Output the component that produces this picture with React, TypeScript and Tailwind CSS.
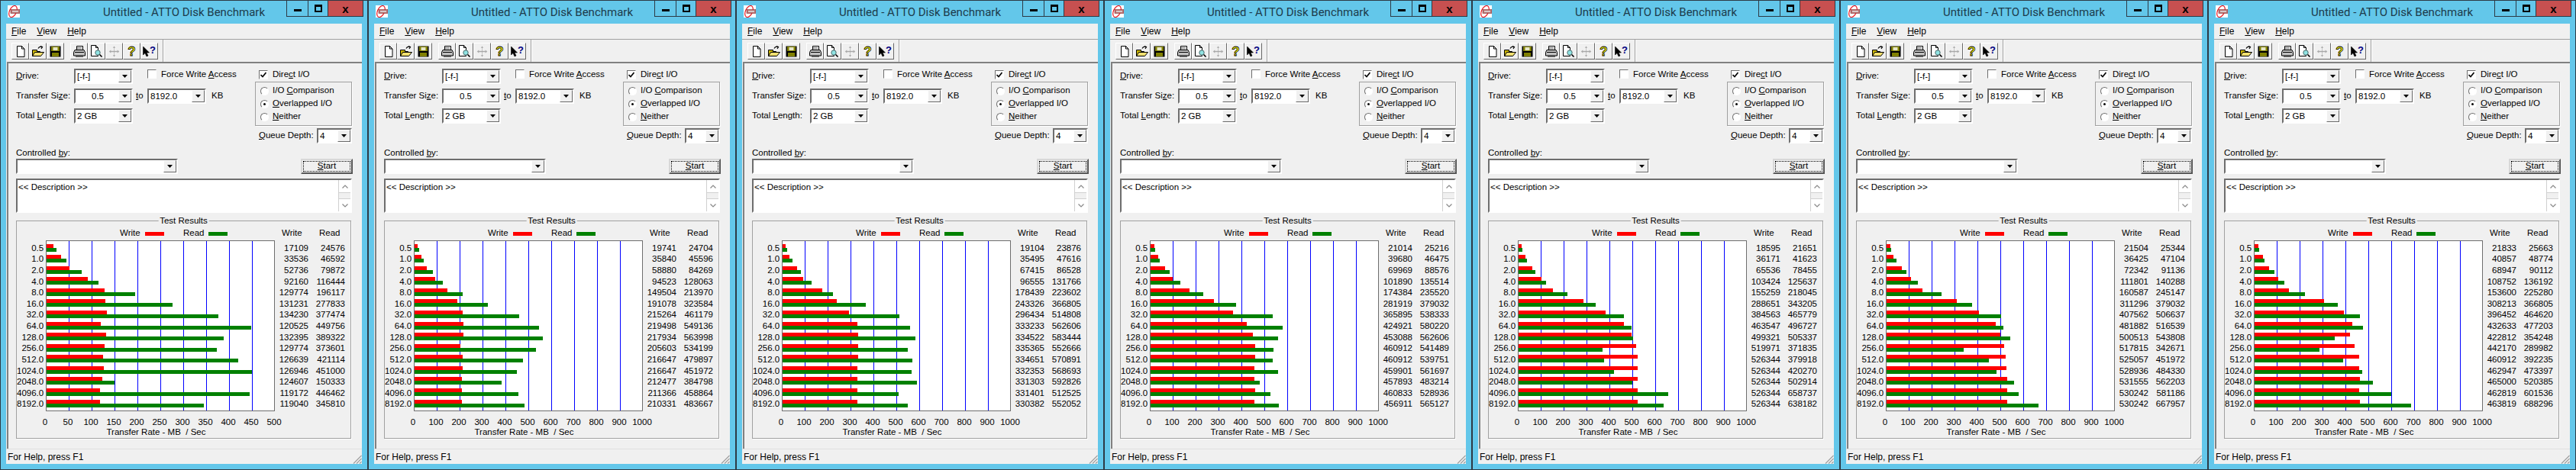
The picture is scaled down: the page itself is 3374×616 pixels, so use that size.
import type { ReactNode } from "react";

const SIZES = ["0.5", "1.0", "2.0", "4.0", "8.0", "16.0", "32.0", "64.0", "128.0", "256.0", "512.0", "1024.0", "2048.0", "4096.0", "8192.0"];
const BAR_TOPS = [5, 19, 34, 48, 63, 77, 92, 107, 121, 136, 150, 165, 179, 194, 209];
const ROWS = "grid grid-rows-[14px_15px_15px_14px_15px_14px_15px_15px_14px_15px_15px_14px_15px_14px_15px] pt-[3px]";
const RAISED = "border border-t-white border-l-white border-r-[#696969] border-b-[#696969]";
const SUNKEN = "border-2 border-t-[#6e6e6e] border-l-[#6e6e6e] border-r-white border-b-white";

const RUNS = [
  {
    max: 500,
    write: [17109, 33536, 52736, 92160, 129774, 131231, 134230, 120525, 132395, 129774, 126639, 126946, 124607, 119172, 119040],
    read: [24576, 46592, 79872, 116444, 196117, 277833, 377474, 449756, 389322, 373601, 421114, 451000, 150333, 446462, 345810],
  },
  {
    max: 1000,
    write: [19741, 35840, 58880, 94523, 149504, 191078, 215264, 219498, 217934, 205603, 216647, 216647, 212477, 211366, 210331],
    read: [24704, 45596, 84269, 128063, 213970, 323584, 461179, 549136, 563998, 534199, 479897, 451972, 384798, 458864, 483667],
  },
  {
    max: 1000,
    write: [19104, 35495, 67415, 96555, 178439, 243326, 296434, 333233, 334522, 335365, 334651, 332353, 331303, 331401, 330382],
    read: [23876, 47616, 86528, 131766, 223602, 366805, 514808, 562606, 583444, 552666, 570891, 568693, 592826, 512525, 552052],
  },
  {
    max: 1000,
    write: [21014, 39680, 69969, 101890, 174384, 281919, 365895, 424921, 453088, 460912, 460912, 459901, 457893, 460833, 456911],
    read: [25216, 46475, 88576, 135514, 235520, 379032, 538333, 580220, 562606, 541489, 539751, 561697, 483214, 528936, 565127],
  },
  {
    max: 1000,
    write: [18595, 36171, 65536, 103424, 155259, 288651, 384563, 463547, 499321, 519971, 526344, 526344, 526344, 526344, 526344],
    read: [21651, 41623, 78455, 125637, 218045, 343205, 465779, 496727, 505337, 371835, 379918, 420270, 502914, 658737, 638182],
  },
  {
    max: 1000,
    write: [21504, 36425, 72342, 111801, 160587, 311296, 407562, 481882, 500513, 517815, 525057, 528936, 531555, 530242, 530242],
    read: [25344, 47104, 91136, 140288, 245147, 379032, 506637, 516539, 543808, 342671, 451972, 484330, 562203, 581186, 667957],
  },
  {
    max: 1000,
    write: [21833, 40857, 68947, 108752, 153600, 308213, 396452, 432633, 422812, 442170, 460912, 462947, 465000, 462819, 463819],
    read: [25663, 48774, 90112, 136192, 225280, 366805, 464620, 477203, 354248, 289982, 392235, 473397, 520385, 601536, 688296],
  },
];

function U({ children }: { children: ReactNode }) {
  return <span className="underline">{children}</span>;
}

function Logo() {
  return (
    <svg width="16" height="16" viewBox="0 0 16 16" className="shrink-0">
      <rect width="16" height="16" fill="#fff" />
      <ellipse cx="7" cy="8" rx="4.5" ry="8" transform="rotate(25 7 8)" fill="none" stroke="#e8141c" strokeWidth="1.2" />
      <rect x="4" y="5.5" width="12" height="5" fill="#b8716f" stroke="#8c3b3b" strokeWidth="0.6" />
      <rect x="6" y="7" width="8" height="2" fill="#d9c9c9" />
    </svg>
  );
}

function DownArrow() {
  return (
    <svg width="7" height="4" viewBox="0 0 7 4">
      <path d="M0 0h7L3.5 4z" fill="#000" />
    </svg>
  );
}

function Combo({ value = "", width, center }: { value?: string; width: string; center?: boolean }) {
  return (
    <div className={`flex h-5 shrink-0 items-stretch bg-white ${SUNKEN} ${width}`}>
      <span className={`flex-1 pl-[2px] leading-[17px] ${center ? "text-center" : ""}`}>{value}</span>
      <span className={`flex w-[17px] items-center justify-center bg-[#f0f0f0] ${RAISED}`}>
        <DownArrow />
      </span>
    </div>
  );
}

function Radio({ checked, children }: { checked?: boolean; children: ReactNode }) {
  return (
    <div className="flex h-[17px] items-center gap-[5px] pl-[6px]">
      <span className="flex size-[11px] items-center justify-center rounded-full border border-t-[#6e6e6e] border-l-[#6e6e6e] border-r-white border-b-white bg-white">
        {checked && <span className="size-[3px] rounded-full bg-black" />}
      </span>
      <span>{children}</span>
    </div>
  );
}

function Checkbox({ checked }: { checked?: boolean }) {
  return (
    <span className="flex size-[12px] shrink-0 items-center justify-center border border-t-[#6e6e6e] border-l-[#6e6e6e] border-r-white border-b-white bg-white">
      {checked && (
        <svg width="8" height="8" viewBox="0 0 8 8">
          <path d="M0.5 4l2.5 2.5L7.5 1" fill="none" stroke="#000" strokeWidth="1.6" />
        </svg>
      )}
    </span>
  );
}

function ToolIcon({ name }: { name: string }) {
  if (name === "new")
    return (
      <svg width="14" height="15" viewBox="0 0 14 15">
        <path d="M2.5.5h6l3.5 3.5v10.5H2.5z" fill="#fff" stroke="#000" />
        <path d="M8.5.5v3.5H12" fill="none" stroke="#000" />
      </svg>
    );
  if (name === "open")
    return (
      <svg width="16" height="15" viewBox="0 0 16 15">
        <path d="M.5 5.5h6v2h4v6H.5z" fill="#c8b400" stroke="#000" />
        <path d="M.5 13.5l3-5h12l-4 5z" fill="#f0df70" stroke="#000" />
        <path d="M8 3.5c1-2 3-3 5-2M11 .5l2.5 1L12 4" fill="none" stroke="#000" strokeWidth="1.2" />
      </svg>
    );
  if (name === "save")
    return (
      <svg width="15" height="15" viewBox="0 0 15 15">
        <rect x=".5" y=".5" width="14" height="14" fill="#000" />
        <rect x="2" y="1" width="11" height="6" fill="#808000" />
        <rect x="3" y="9" width="9" height="5" fill="#808000" />
        <rect x="4.5" y="2" width="6" height="4" fill="#e6e6c8" />
      </svg>
    );
  if (name === "print")
    return (
      <svg width="16" height="15" viewBox="0 0 16 15">
        <path d="M4.5.5h8v5h-8z" fill="#fff" stroke="#000" />
        <path d="M2 5.5h12l1.5 3v4.5H.5V8.5z" fill="#c0c0c0" stroke="#000" />
        <path d="M2 8.5h12" stroke="#000" />
        <path d="M3 13.5h10v1H3z" fill="#000" />
        <path d="M5 2.5h6M5 4h6" stroke="#808080" />
      </svg>
    );
  if (name === "preview")
    return (
      <svg width="16" height="16" viewBox="0 0 16 16">
        <path d="M.5.5h6l3 3v11H.5z" fill="#fff" stroke="#000" />
        <path d="M6.5.5v3h3" fill="none" stroke="#000" />
        <circle cx="9" cy="10" r="3.2" fill="#8fe3e3" stroke="#4a6a6a" />
        <path d="M11.5 12.5l3 3" stroke="#000" strokeWidth="1.6" />
      </svg>
    );
  if (name === "move")
    return (
      <svg width="15" height="15" viewBox="0 0 15 15">
        <path d="M7.5 0l2 3H8v3.500h3.500V5l3 2.500-3 2.500V8.500H8V12h1.500l-2 3-2-3H7V8.500H3.500V10l-3-2.500 3-2.500v1.500H7V3H5.500z" fill="#a8a8a8" stroke="#fff" strokeWidth="0.4" />
      </svg>
    );
  if (name === "help")
    return <span className="font-bold text-[17px] leading-[17px] text-[#ffff00] [-webkit-text-stroke:0.8px_#000]">?</span>;
  return (
    <span className="flex items-start">
      <svg width="9" height="15" viewBox="0 0 9 15">
        <path d="M.5 1v11l2.500-2.500 2 4.500 2-1-2-4h3.500z" fill="#000" stroke="#000" strokeWidth="0.6" />
      </svg>
      <span className="-mt-[1px] font-bold text-[13px] leading-[13px] text-[#000080]">?</span>
    </span>
  );
}

function ToolButton({ name }: { name: string }) {
  return (
    <span className={`flex h-[22px] w-[23px] items-center justify-center bg-[#f0f0f0] ${RAISED}`}>
      <ToolIcon name={name} />
    </span>
  );
}

function Chart({ write, read, max }: { write: number[]; read: number[]; max: number }) {
  const scale = 300 / max;
  const bar = (v: number) => Math.floor((v / 1000) * scale) - 1;
  return (
    <svg width="300" height="224" viewBox="0 0 300 224" className="shrink-0">
      <rect x="0.5" y="0.5" width="299" height="223" fill="#fff" stroke="#6e6e6e" />
      {Array.from({ length: 9 }, (_, i) => (
        <rect key={i} x={30 * (i + 1)} y="1" width="1" height="222" fill="#0000ff" />
      ))}
      {BAR_TOPS.map((y, i) => (
        <g key={y}>
          <rect x="1" y={y} width={bar(write[i])} height="5" fill="#ff0000" />
          <rect x="1" y={y + 5} width={bar(read[i])} height="5" fill="#008000" />
        </g>
      ))}
    </svg>
  );
}

function TestResults({ write, read, max }: { write: number[]; read: number[]; max: number }) {
  const ticks = Array.from({ length: 11 }, (_, i) => (i * max) / 10);
  return (
    <div className="relative mt-[10px] h-[286px] w-[439px] border border-[#a0a0a0] shadow-[1px_1px_0_#fff]">
      <span className="absolute -top-[7px] left-1/2 -translate-x-1/2 bg-[#f0f0f0] px-[2px] leading-[13px]">Test Results</span>
      <div className="flex h-[25px] items-center pl-[135px] pt-[7px]">
        <span className="w-[33px]">Write</span>
        <span className="h-[5px] w-[25px] bg-[#ff0000]" />
        <span className="ml-[25px] w-[33px]">Read</span>
        <span className="h-[5px] w-[25px] bg-[#008000]" />
        <span className="ml-[71px] w-[49px]">Write</span>
        <span>Read</span>
      </div>
      <div className="flex">
        <div className={`w-[35px] text-right ${ROWS}`}>
          {SIZES.map((s) => (
            <span key={s} className="leading-[14px]">{s}</span>
          ))}
        </div>
        <div className="ml-[3px]">
          <Chart write={write} read={read} max={max} />
        </div>
        <div className={`w-[44px] text-right ${ROWS}`}>
          {write.map((v, i) => (
            <span key={i} className="leading-[14px]">{v}</span>
          ))}
        </div>
        <div className={`w-[48px] text-right ${ROWS}`}>
          {read.map((v, i) => (
            <span key={i} className="leading-[14px]">{v}</span>
          ))}
        </div>
      </div>
      <div className="mt-[7px] flex h-[14px] pl-[22px] leading-[14px]">
        {ticks.map((t) => (
          <span key={t} className="w-[30px] text-center">{t}</span>
        ))}
      </div>
      <div className="h-[13px] w-[365px] whitespace-pre text-center leading-[13px]">Transfer Rate - MB  / Sec</div>
    </div>
  );
}

function Window({ write, read, max }: { write: number[]; read: number[]; max: number }) {
  return (
    <div className="flex h-[616px] w-[482px] shrink-0 flex-col border border-[#2d3a45] bg-[#63c7ea] px-[7px] pb-[7px] font-['Liberation_Sans',sans-serif] text-[11.5px] text-black">
      <div className="grid h-[30px] shrink-0 grid-cols-[1fr_auto_1fr]">
        <div className="pl-[2px] pt-[6px]">
          <Logo />
        </div>
        <div className="pt-[5px] font-['Roboto',sans-serif] text-[15px] leading-[21px] text-[#1d3b4c]">Untitled - ATTO Disk Benchmark</div>
        <div className="flex justify-end">
          <div className="-mr-[2px] flex h-[21px] border border-t-0 border-[#2d3a45]">
            <span className="flex w-[28px] items-center justify-center border-r border-[#2d3a45]">
              <span className="mt-[4px] h-[3px] w-[10px] bg-black" />
            </span>
            <span className="flex w-[26px] items-center justify-center border-r border-[#2d3a45]">
              <span className="size-[10px] border-2 border-t-[3px] border-black" />
            </span>
            <span className="flex w-[45px] items-center justify-center bg-[#c75050] font-bold text-[15px] leading-none">x</span>
          </div>
        </div>
      </div>
      <div className="flex min-h-0 flex-1 flex-col bg-[#f0f0f0]">
        <div className="flex h-[21px] shrink-0 items-center gap-[14px] border-b border-[#a0a0a0] pl-[7px] text-[12px]">
          <span><U>F</U>ile</span>
          <span><U>V</U>iew</span>
          <span><U>H</U>elp</span>
        </div>
        <div className="flex h-[29px] shrink-0 items-start pl-[7px] pt-[4px]">
          <ToolButton name="new" />
          <ToolButton name="open" />
          <ToolButton name="save" />
          <span className="w-[8px]" />
          <ToolButton name="print" />
          <ToolButton name="preview" />
          <ToolButton name="move" />
          <ToolButton name="help" />
          <ToolButton name="whats" />
          <span className="-mt-[4px] ml-[6px] h-[29px] w-[2px] border-l border-[#a0a0a0] bg-white" />
        </div>
        <div className="ml-[1px] min-h-0 flex-1 border-t-2 border-l-2 border-[#808080] pl-[10px] pt-[7px]">
          <div className="flex h-[98px]">
            <div className="flex w-[313px] flex-col gap-[6px]">
              <div className="flex items-center">
                <span className="w-[76px]"><U>D</U>rive:</span>
                <Combo value="[-f-]" width="w-[77px]" />
                <span className="ml-[19px] mr-[6px] mt-[1px] flex self-start"><Checkbox /></span>
                <span className="self-start leading-[15px]">Force Write <U>A</U>ccess</span>
              </div>
              <div className="flex items-center">
                <span className="w-[76px]">Transfer Si<U>z</U>e:</span>
                <Combo value="0.5" width="w-[77px]" center />
                <span className="ml-[4px] w-[15px]"><U>t</U>o</span>
                <Combo value="8192.0" width="w-[77px]" />
                <span className="ml-[7px]">KB</span>
              </div>
              <div className="flex items-center">
                <span className="w-[76px]">Total <U>L</U>ength:</span>
                <Combo value="2 GB" width="w-[77px]" />
              </div>
            </div>
            <div className="flex w-[127px] flex-col">
              <div className="flex h-[17px] items-center gap-[6px] pb-[2px] pl-[5px]">
                <Checkbox checked />
                <span>Dire<U>c</U>t I/O</span>
              </div>
              <div className="flex h-[58px] flex-col justify-center border border-[#a0a0a0] shadow-[1px_1px_0_#fff]">
                <Radio>I/O <U>C</U>omparison</Radio>
                <Radio checked><U>O</U>verlapped I/O</Radio>
                <Radio><U>N</U>either</Radio>
              </div>
              <div className="mt-[3px] flex items-center pl-[5px]">
                <span className="w-[76px]"><U>Q</U>ueue Depth:</span>
                <Combo value="4" width="w-[46px]" />
              </div>
            </div>
          </div>
          <div className="mt-[6px] h-[14px] leading-[13px]">Controlled <U>b</U>y:</div>
          <div className="flex w-[441px] justify-between">
            <Combo width="w-[212px]" />
            <span className="flex h-5 w-[68px] items-center justify-center border-2 border-t-[#d8d8d8] border-l-[#d8d8d8] border-r-[#555] border-b-[#555] bg-[#f0f0f0] p-px">
              <span className="flex h-full w-full items-center justify-center border border-dotted border-black"><U>S</U>tart</span>
            </span>
          </div>
          <div className={`mt-[6px] flex h-[45px] w-[440px] bg-white ${SUNKEN}`}>
            <span className="flex-1 pl-[1px] pt-[2px] leading-[14px]">&lt;&lt; Description &gt;&gt;</span>
            <span className="flex w-[16px] flex-col border-l border-[#d0d0d0] bg-[#f0f0f0]">
              <span className="flex h-[17px] items-center justify-center border-b border-[#d0d0d0] bg-white">
                <svg width="8" height="5" viewBox="0 0 8 5"><path d="M.5 4.500L4 1l3.500 3.500" fill="none" stroke="#888" strokeWidth="1.200" /></svg>
              </span>
              <span className="flex-1" />
              <span className="flex h-[17px] items-center justify-center border-t border-[#d0d0d0] bg-white">
                <svg width="8" height="5" viewBox="0 0 8 5"><path d="M.5.500L4 4l3.500-3.500" fill="none" stroke="#888" strokeWidth="1.200" /></svg>
              </span>
            </span>
          </div>
          <TestResults write={write} read={read} max={max} />
        </div>
        <div className="flex h-[20px] shrink-0 items-center justify-between border-t border-[#e0e0e0] pl-[2px] text-[12px]">
          <span>For Help, press F1</span>
          <svg width="12" height="12" viewBox="0 0 12 12" className="mt-[6px]">
            <path d="M1 11.500L11.500 1M5 11.500L11.500 5M9 11.500l2.500-2.500" stroke="#a0a0a0" strokeWidth="1.200" fill="none" />
          </svg>
        </div>
      </div>
    </div>
  );
}

export default function App() {
  return (
    <div className="flex h-[616px] w-[3374px] overflow-hidden">
      {RUNS.map((r, i) => (
        <Window key={i} write={r.write} read={r.read} max={r.max} />
      ))}
    </div>
  );
}
